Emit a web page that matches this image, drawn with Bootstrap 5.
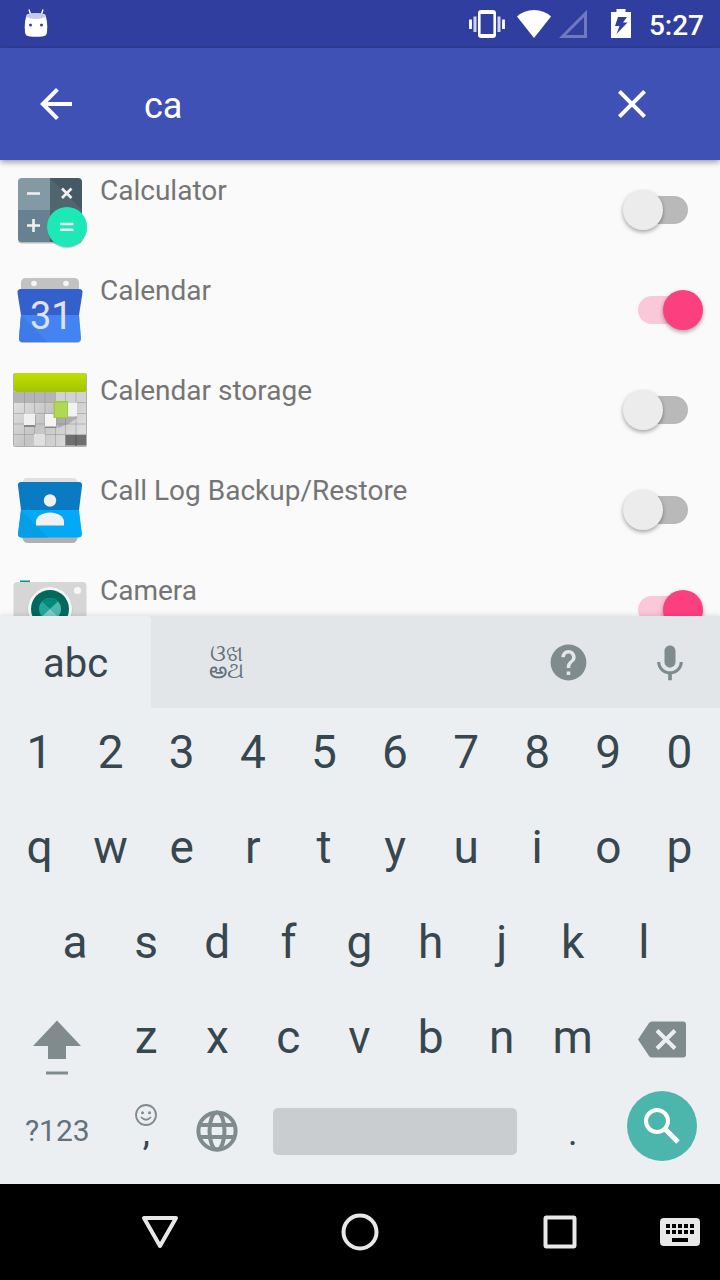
<!DOCTYPE html>
<html lang="en">
<head>
<meta charset="utf-8">
<meta name="viewport" content="width=device-width, initial-scale=1">
<title>App search</title>
<link href="https://cdn.jsdelivr.net/npm/bootstrap@5.3.0/dist/css/bootstrap.min.css" rel="stylesheet">
<style>
  body { font-family: Roboto, "Noto Sans", sans-serif; background: #fafafa; }
  button { color: inherit; font-family: inherit; }
  svg { display: block; flex: none; }
  .bare { background: none; border: 0; padding: 0; }

  .status-bar { background: #303f9f; height: 48px; padding: 0 16px 0 24px; }
  .status-wifi { margin-left: 12px; }
  .clock { font-size: 28px; font-weight: 500; line-height: 44px; margin-left: 18px; padding-top: 4px; }

  .app-bar { background: #3f51b5; height: 112px; padding: 0 64px 0 32px; box-shadow: 0 2px 6px rgba(0,0,0,.4); z-index: 1; }
  .search-text { font-size: 36px; line-height: 48px; margin-left: 64px; padding-top: 4px; min-width: 0; outline: 0; color: #fff; }

  .app-list { flex: 1 1 0; min-height: 0; overflow: hidden; }
  .app-row { height: 100px; padding: 10px 32px 10px 10px; gap: 10px; color: #757575; flex: none; }
  .app-name { font-size: 28px; line-height: 42px; }
  .app-list .toggle { position: relative; width: 50px; height: 28px; margin: 0; border: 0; border-radius: 14px; background: #b9b9b9; box-shadow: none; }
  .toggle::before { content: ""; position: absolute; left: -15px; top: -6px; width: 40px; height: 40px; border-radius: 50%; background: #ececec; box-shadow: 0 2px 4px rgba(0,0,0,.35); }
  .app-list .toggle:checked { background: #fbc8d9; }
  .toggle:checked::before { left: 25px; background: #fc407f; }

  .keyboard { background: #eceff1; color: #37474f; box-shadow: 0 0 6px rgba(0,0,0,.15); z-index: 1; }
  .strip { background: #e3e6e8; height: 92px; color: #7f8b8d; }
  .strip-tab { flex: 0 0 21%; }
  .strip-tool { flex: 0 0 14%; }
  .strip .tab-current { background: #eceff1; color: #37474f; font-size: 40px; line-height: 48px; border-radius: 0 4px 0 0; padding-top: 4px; }
  .tab-scripts { color: #62727a; font-size: 23px; font-weight: 500; line-height: 17px; }
  .key-row { height: 95px; padding: 0 5px 0 4px; }
  .key { flex: 2 1 0; min-width: 0; height: 100%; display: flex; align-items: center; justify-content: center; padding: 0 0 7px; font-size: 46px; line-height: 48px; background: none; border: 0; }
  .key-wide { flex-grow: 3; }
  .half-gap { flex: 1 1 0; }
  .key-space { flex-grow: 8; }
  .key-icon { color: #7f8b8d; }
  .bottom-row { height: 96px; }
  .bottom-row .key { padding-bottom: 10px; }
  .key-mode { font-size: 30px; color: #62727a; }
  .bottom-row .key-mark { font-size: 36px; padding-bottom: 6px; }
  .smile { position: absolute; top: 16px; left: 50%; transform: translateX(-50%); color: #7f8b8d; }
  .space-bar { width: 86%; height: 47px; border-radius: 5px; background: #c9cdd0; }
  .bottom-row .key-go { padding-bottom: 20px; }
  .go { width: 70px; height: 70px; background: #4db6ac; color: #fff; }

  .nav-keys { background: #000; height: 96px; padding: 0 20px 0 60px; color: #e8e8e8; }
</style>
</head>
<body>
<div class="vh-100 d-flex flex-column">

  <header class="status-bar d-flex align-items-center text-white">
    <svg class="me-auto" width="24" height="30" viewBox="0 0 24 30">
      <path d="M5 .5 7 7M19 .5 17 7" stroke="#fff" stroke-width="1.4" fill="none"/>
      <path d="M3 5.500Q12 3 21 5.500Q24 12 23 23Q23 27 18 27.500Q12 28 6 27.500Q1 27 1 23Q0 12 3 5.500Z" fill="#fff"/>
      <path d="M3 5.500Q12 3 21 5.500L22 8Q12 12 2 8Z" fill="#c5cae9"/>
      <circle cx="6.500" cy="16" r="1.500" fill="#303f9f"/><circle cx="17.500" cy="16" r="1.500" fill="#303f9f"/>
    </svg>
    <svg width="36" height="28" viewBox="0 0 36 28">
      <rect x="10.300" y="1.300" width="15.400" height="25.400" rx="2" fill="none" stroke="#fff" stroke-width="2.600"/>
      <path d="M10 3H26M10 25H26" stroke="#fff" stroke-width="2"/>
      <path d="M1.500 9.500V19M34.500 9.500V19" stroke="#fff" stroke-width="2.800"/><path d="M6 6.500V22M30 6.500V22" stroke="#cfd3ee" stroke-width="3"/>
    </svg>
    <svg class="status-wifi" width="34" height="28" viewBox="0 0 34 28"><path d="M0 6.500Q7 0 17 0Q27 0 34 6.500L17 28Z" fill="#fff"/></svg>
    <svg class="ms-2" width="28" height="28" viewBox="0 0 28 28"><path d="M3.500 26.500 26.500 3.500V26.500Z" fill="none" stroke="#7079bc" stroke-width="3"/></svg>
    <svg class="ms-4" width="20" height="30" viewBox="0 0 20 30"><path d="M5.500 0h9v3H20V29H0V3h5.500Z" fill="#fff"/><path d="M7 8H16L12 13.500H16.500L5.500 25 8.500 17H4Z" fill="#303f9f"/></svg>
    <span class="clock">5:27</span>
  </header>

  <form class="app-bar d-flex align-items-center position-relative text-white" role="search">
    <button type="button" class="bare" aria-label="Back">
      <svg width="48" height="48" viewBox="0 0 24 24" fill="currentColor"><path d="M20 11H7.830l5.590-5.590L12 4l-8 8 8 8 1.410-1.410L7.830 13H20v-2z"/></svg>
    </button>
    <input class="bare search-text flex-grow-1" type="text" value="ca" aria-label="Search apps">
    <button type="button" class="bare" aria-label="Clear">
      <svg width="48" height="48" viewBox="0 0 24 24" fill="currentColor"><path d="M19 6.410 17.590 5 12 10.590 6.410 5 5 6.410 10.590 12 5 17.590 6.410 19 12 13.410 17.590 19 19 17.590 13.410 12z"/></svg>
    </button>
  </form>

  <main class="app-list d-flex flex-column">
    <div class="app-row d-flex align-items-center">
      <svg width="80" height="80" viewBox="0 0 80 80">
        <rect x="8" y="9" width="64" height="64.500" rx="4" fill="#000" opacity=".25"/>
        <path d="M12 8H40V40H8V12Q8 8 12 8Z" fill="#8399a4"/><path d="M40 8H68Q72 8 72 12V40H40Z" fill="#455a64"/>
        <path d="M8 40H40V72H12Q8 72 8 68Z" fill="#668190"/><path d="M40 40H72V68Q72 72 68 72H40Z" fill="#4c626c"/>
        <path d="M40 8 72 40H40Z" fill="#51656f"/>
        <path d="M17 23.500H30M17 55.500H30M23.500 49V62M52 18.500 61.500 28M61.500 18.500 52 28" stroke="#f1f1f1" stroke-width="2.600"/>
        <circle cx="57" cy="58" r="20" fill="#000" opacity=".2"/><circle cx="57" cy="57" r="20" fill="#1de9b6"/>
        <path d="M50 54H63.500M50 59.800H63.500" stroke="#f1f1f1" stroke-width="2.600"/>
      </svg>
      <label class="app-name flex-grow-1 align-self-start" for="a1">Calculator</label>
      <input class="form-check-input toggle" type="checkbox" role="switch" id="a1">
    </div>
    <div class="app-row d-flex align-items-center">
      <svg width="80" height="80" viewBox="0 0 80 80">
        <path d="M11 20V13Q11 8 16 8H64Q69 8 69 13V20Z" fill="#c2c2c2"/>
        <circle cx="24" cy="13.500" r="2.800" fill="#f5f5f5"/><circle cx="56" cy="13.500" r="2.800" fill="#f5f5f5"/>
        <path d="M11 46 9 69Q9 73 13 73H67Q71 73 71 69L69 46Z" fill="#bbb"/>
        <path d="M11 19H69Q73 19 72.500 23L69 45H11L7.500 23Q7 19 11 19Z" fill="#3460cc"/>
        <path d="M11 45H69L71 68Q71 72 67 72H13Q9 72 9 68Z" fill="#4384f3"/>
        <path d="M11 45 38 72H13Q9 72 9 68Z" fill="#3f7be6"/>
        <text x="20" y="59" font-size="38" fill="#dfe2ea" font-family="Roboto, sans-serif">31</text>
      </svg>
      <label class="app-name flex-grow-1 align-self-start" for="a2">Calendar</label>
      <input class="form-check-input toggle" type="checkbox" role="switch" id="a2" checked>
    </div>
    <div class="app-row d-flex align-items-center">
      <svg width="80" height="80" viewBox="0 0 80 80">
        <defs><linearGradient id="lime" x1="0" y1="0" x2="0" y2="1"><stop offset="0" stop-color="#bfe000"/><stop offset="1" stop-color="#a3c400"/></linearGradient>
        <linearGradient id="tiles" x1="0" y1="0" x2="1" y2="0.600"><stop offset="0" stop-color="#e6e6e6"/><stop offset=".55" stop-color="#c4c4c4"/><stop offset="1" stop-color="#dcdcdc"/></linearGradient></defs>
        <rect x="3" y="3" width="74" height="74" rx="2" fill="#b0b0b0"/>
        <rect x="4" y="21" width="72" height="55" fill="url(#tiles)"/>
        <rect x="4" y="3" width="72" height="19" rx="2" fill="url(#lime)"/>
        <path d="M4 22H45V32H4Z" fill="#b4b4b4"/><path d="M45 22H76V32H45Z" fill="#d2d2d2"/>
        <path d="M14.500 22V76M24.500 22V76M35 22V76M45.500 22V76M55.500 22V76M66 22V76M4 32.500H76M4 43.500H76M4 54H76M4 64.500H76" stroke="#8f8f8f" stroke-opacity=".5" fill="none"/>
        <path d="M46 47H68L60 53 48 58Z" fill="#777" opacity=".4"/>
        <rect x="55.500" y="65" width="20.500" height="10.500" fill="#6f6f6f"/><path d="M66 65V76" stroke="#555"/>
        <rect x="14" y="45" width="11.500" height="12" fill="#888"/><rect x="14" y="43.500" width="11" height="11.500" fill="#f0f0f0"/>
        <rect x="35" y="45" width="11.500" height="13" fill="#888"/><rect x="35" y="44" width="11" height="12.500" fill="#f4f4f4"/>
        <rect x="24" y="64" width="11" height="11.500" fill="#e0e0e0"/>
        <rect x="57" y="32.500" width="10" height="13.500" fill="#f2f2f2"/>
        <rect x="43.500" y="31" width="14.500" height="17" fill="#9ecb3c"/><rect x="45" y="32.500" width="12" height="14.500" fill="#afd955"/>
      </svg>
      <label class="app-name flex-grow-1 align-self-start" for="a3">Calendar storage</label>
      <input class="form-check-input toggle" type="checkbox" role="switch" id="a3">
    </div>
    <div class="app-row d-flex align-items-center">
      <svg width="80" height="80" viewBox="0 0 80 80">
        <path d="M12 13Q13 8 17 8H63Q67 8 68 13Z" fill="#e0e0e0"/><path d="M12 66Q13 73 17 73H63Q67 73 68 66Z" fill="#b0b0b0"/>
        <path d="M11 12H69Q72.500 12 72 16L69 40H11L8 16Q7.500 12 11 12Z" fill="#0a7ac2"/>
        <path d="M11 40H69L72 64Q72 67.500 68 67.500H12Q8 67.500 8 64Z" fill="#03a9f4"/>
        <path d="M11 40 38 67.500H12Q8 67.500 8 64Z" fill="#049ee6"/>
        <circle cx="40" cy="30.500" r="6.200" fill="#f1f1f1"/><path d="M26 55.500V52C26 46 33 42.500 40 42.500S54 46 54 52V55.500Z" fill="#f1f1f1"/>
      </svg>
      <label class="app-name flex-grow-1 align-self-start" for="a4">Call Log Backup/Restore</label>
      <input class="form-check-input toggle" type="checkbox" role="switch" id="a4">
    </div>
    <div class="app-row d-flex align-items-center">
      <svg width="80" height="80" viewBox="0 0 80 80">
        <rect x="10" y="10.500" width="10" height="4" fill="#009688"/>
        <rect x="3.500" y="12" width="73" height="58" rx="4" fill="#d6d6d6"/>
        <circle cx="67.500" cy="20.500" r="3.600" fill="#f7f7f7"/>
        <circle cx="40" cy="39.500" r="22.500" fill="#bdbdbd"/><circle cx="40" cy="39" r="22" fill="#f5f5f5"/><circle cx="40" cy="39" r="19" fill="#00695c"/>
        <circle cx="40" cy="39" r="11" fill="#26a69a"/><path d="M40 39 32 31.500A11 11 0 0 1 48 31.500Z" fill="#00897b"/><path d="M40 39 48 31.500A11 11 0 0 1 48 46.500Z" fill="#4db6ac"/><path d="M40 39 48 46.500A11 11 0 0 1 32 46.500Z" fill="#80cbc4"/>
      </svg>
      <label class="app-name flex-grow-1 align-self-start" for="a5">Camera</label>
      <input class="form-check-input toggle" type="checkbox" role="switch" id="a5" checked>
    </div>
  </main>

  <section class="keyboard position-relative" aria-label="Keyboard">
    <div class="strip d-flex">
      <button type="button" class="bare strip-tab tab-current">abc</button>
      <button type="button" class="bare strip-tab tab-scripts">ଓଖ<br>అଥ</button>
      <button type="button" class="bare strip-tool ms-auto d-flex align-items-center justify-content-center" aria-label="Help">
        <svg width="43" height="43" viewBox="0 0 24 24" fill="currentColor"><path d="M12 2C6.480 2 2 6.480 2 12s4.480 10 10 10 10-4.480 10-10S17.520 2 12 2zm1 17h-2v-2h2v2zm2.070-7.750-.9.920C13.450 12.900 13 13.500 13 15h-2v-.5c0-1.100.45-2.100 1.170-2.830l1.240-1.260c.37-.36.590-.86.590-1.410 0-1.100-.9-2-2-2s-2 .9-2 2H8c0-2.210 1.790-4 4-4s4 1.790 4 4c0 .88-.36 1.680-.93 2.250z"/></svg>
      </button>
      <button type="button" class="bare strip-tool d-flex align-items-center justify-content-center" aria-label="Voice input">
        <svg width="44" height="44" viewBox="0 -1 24 24" fill="currentColor"><path d="M12 14c1.660 0 3-1.340 3-3V5c0-1.660-1.340-3-3-3S9 3.340 9 5v6c0 1.660 1.340 3 3 3zm5.300-3c0 3-2.540 5.100-5.300 5.100S6.700 14 6.700 11H5c0 3.410 2.720 6.230 6 6.720V21h2v-3.280c3.280-.48 6-3.300 6-6.720h-1.700z"/></svg>
      </button>
    </div>
    <div class="key-row d-flex">
      <button type="button" class="key">1</button><button type="button" class="key">2</button><button type="button" class="key">3</button><button type="button" class="key">4</button><button type="button" class="key">5</button><button type="button" class="key">6</button><button type="button" class="key">7</button><button type="button" class="key">8</button><button type="button" class="key">9</button><button type="button" class="key">0</button>
    </div>
    <div class="key-row d-flex">
      <button type="button" class="key">q</button><button type="button" class="key">w</button><button type="button" class="key">e</button><button type="button" class="key">r</button><button type="button" class="key">t</button><button type="button" class="key">y</button><button type="button" class="key">u</button><button type="button" class="key">i</button><button type="button" class="key">o</button><button type="button" class="key">p</button>
    </div>
    <div class="key-row d-flex">
      <span class="half-gap"></span><button type="button" class="key">a</button><button type="button" class="key">s</button><button type="button" class="key">d</button><button type="button" class="key">f</button><button type="button" class="key">g</button><button type="button" class="key">h</button><button type="button" class="key">j</button><button type="button" class="key">k</button><button type="button" class="key">l</button><span class="half-gap"></span>
    </div>
    <div class="key-row d-flex">
      <button type="button" class="key key-wide key-icon" aria-label="Shift"><svg width="48" height="76" viewBox="0 0 48 76" fill="currentColor"><path d="M24 21.500 48 47H33V60H15V47H0ZM13 72.500H35V75.500H13Z"/></svg></button>
      <button type="button" class="key">z</button><button type="button" class="key">x</button><button type="button" class="key">c</button><button type="button" class="key">v</button><button type="button" class="key">b</button><button type="button" class="key">n</button><button type="button" class="key">m</button>
      <button type="button" class="key key-wide key-icon" aria-label="Backspace"><svg width="48" height="42" viewBox="0 0 48 42"><path d="M14 5.500H45Q48 5.500 48 8.500V38.500Q48 41.500 45 41.500H14Q12 41.500 11 40L0 23.500 11 7Q12 5.500 14 5.500Z" fill="currentColor"/><path d="M19 14.500 37 32.500M37 14.500 19 32.500" stroke="#eceff1" stroke-width="4"/></svg></button>
    </div>
    <div class="key-row bottom-row d-flex">
      <button type="button" class="key key-wide key-mode">?123</button>
      <button type="button" class="key key-mark position-relative"><svg class="smile" width="22" height="22" viewBox="0 0 22 22" fill="none" stroke="currentColor"><circle cx="11" cy="11" r="10" stroke-width="1.800"/><circle cx="7.500" cy="8.800" r="1.500" fill="currentColor" stroke="none"/><circle cx="14.500" cy="8.800" r="1.500" fill="currentColor" stroke="none"/><path d="M6 13Q11 18.500 16 13" stroke-width="1.800"/></svg>,</button>
      <button type="button" class="key key-icon" aria-label="Change language"><svg width="42" height="42" viewBox="0 0 42 42" fill="none" stroke="currentColor" stroke-width="4"><circle cx="21" cy="21" r="18.600"/><ellipse cx="21" cy="21" rx="7.500" ry="18.600"/><path d="M4 15H38M4 27H38"/></svg></button>
      <button type="button" class="key key-space" aria-label="Space"><span class="space-bar"></span></button>
      <button type="button" class="key key-mark">.</button>
      <button type="button" class="key key-wide key-go" aria-label="Search"><span class="go rounded-circle d-flex align-items-center justify-content-center"><svg width="36" height="36" viewBox="0 0 36 36" fill="none" stroke="currentColor"><circle cx="13" cy="13" r="11" stroke-width="4"/><path d="M21 21 34 34" stroke-width="5"/></svg></span></button>
    </div>
  </section>

  <nav class="nav-keys d-flex align-items-center" aria-label="System">
    <button type="button" class="bare flex-fill d-flex justify-content-center" aria-label="Back"><svg width="40" height="40" viewBox="0 0 40 40" fill="none" stroke="currentColor" stroke-width="4" stroke-linejoin="round"><path d="M4 6H36L20 34Z"/></svg></button>
    <button type="button" class="bare flex-fill d-flex justify-content-center" aria-label="Home"><svg width="40" height="40" viewBox="0 0 40 40" fill="none" stroke="currentColor" stroke-width="4"><circle cx="20" cy="20" r="16.500"/></svg></button>
    <button type="button" class="bare flex-fill d-flex justify-content-center" aria-label="Recent apps"><svg width="40" height="40" viewBox="0 0 40 40" fill="none" stroke="currentColor" stroke-width="4"><rect x="5.500" y="5.500" width="29" height="29" rx="1"/></svg></button>
    <button type="button" class="bare" aria-label="Choose keyboard"><svg width="40" height="28" viewBox="0 0 40 28"><rect width="40" height="28" rx="4" fill="currentColor"/><path d="M6 8H34M6 14H34" stroke="#000" stroke-width="4" stroke-dasharray="4 2"/><path d="M12 22H28" stroke="#000" stroke-width="4"/></svg></button>
  </nav>
</div>
<script src="https://cdn.jsdelivr.net/npm/bootstrap@5.3.0/dist/js/bootstrap.bundle.min.js"></script>
</body>
</html>
